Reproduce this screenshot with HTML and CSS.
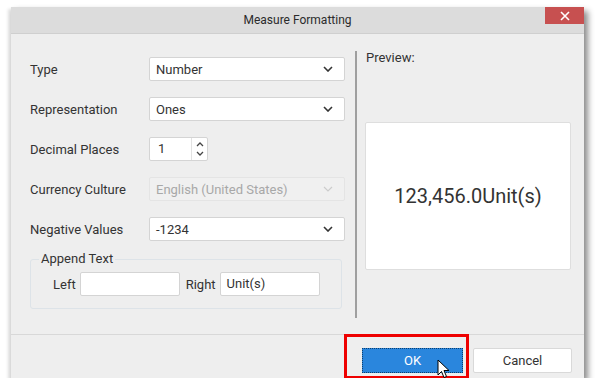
FILE: index.html
```html
<!DOCTYPE html>
<html>

<head>
    <meta charset="utf-8" />
    <title>Measure Formatting</title>
    <link rel="stylesheet" href="styles.css">
</head>

<body>
    <div class="dialog">
        <div class="titlebar">
            <span class="title">Measure Formatting</span>
            <button class="closeButton">
                <svg width="10" height="10" viewBox="0 0 10 10"><path d="M1 1L9 9M9 1L1 9" stroke="#fff" stroke-width="1.6"/></svg>
            </button>
        </div>

        <div class="content">
            <div class="leftPanel">
                <div class="row">
                    <label class="label">Type</label>
                    <div class="dropdown"><span>Number</span>
                        <svg class="chevron" width="10" height="6" viewBox="0 0 10 6"><path d="M1 1L5 5L9 1" fill="none" stroke="#333" stroke-width="1.6"/></svg>
                    </div>
                </div>
                <div class="row">
                    <label class="label">Representation</label>
                    <div class="dropdown"><span>Ones</span>
                        <svg class="chevron" width="10" height="6" viewBox="0 0 10 6"><path d="M1 1L5 5L9 1" fill="none" stroke="#333" stroke-width="1.6"/></svg>
                    </div>
                </div>
                <div class="row">
                    <label class="label">Decimal Places</label>
                    <div class="numeric">
                        <span class="numericValue">1</span>
                        <span class="spinner">
                            <svg width="8" height="5" viewBox="0 0 8 5"><path d="M1 4L4 1L7 4" fill="none" stroke="#444" stroke-width="1.3"/></svg>
                            <svg width="8" height="5" viewBox="0 0 8 5"><path d="M1 1L4 4L7 1" fill="none" stroke="#444" stroke-width="1.3"/></svg>
                        </span>
                    </div>
                </div>
                <div class="row">
                    <label class="label">Currency Culture</label>
                    <div class="dropdown disabled"><span>English (United States)</span>
                        <svg class="chevron" width="10" height="6" viewBox="0 0 10 6"><path d="M1 1L5 5L9 1" fill="none" stroke="#ccc" stroke-width="1.2"/></svg>
                    </div>
                </div>
                <div class="row">
                    <label class="label">Negative Values</label>
                    <div class="dropdown"><span>-1234</span>
                        <svg class="chevron" width="10" height="6" viewBox="0 0 10 6"><path d="M1 1L5 5L9 1" fill="none" stroke="#333" stroke-width="1.6"/></svg>
                    </div>
                </div>
                <fieldset class="appendBox">
                    <legend>Append Text</legend>
                    <div class="appendRow">
                        <label>Left</label>
                        <div class="textbox"></div>
                        <label>Right</label>
                        <div class="textbox">Unit(s)</div>
                    </div>
                </fieldset>
            </div>
            <div class="separator"></div>
            <div class="rightPanel">
                <div class="previewLabel">Preview:</div>
                <div class="previewBox">123,456.0Unit(s)</div>
            </div>
        </div>

        <div class="footer">
            <button class="okButton">OK</button>
            <button class="cancelButton">Cancel</button>
        </div>

        <div class="highlight"></div>
        <svg class="cursor" width="13" height="20" viewBox="0 0 13 20">
            <path d="M1 1L1 16L4.5 12.5L7 18.5L9.5 17.5L7 11.5L12 11.5Z" fill="#fff" stroke="#000" stroke-width="1"/>
        </svg>
    </div>
</body>

</html>
```

FILE: styles.css
```css
body {
    margin: 0;
    background-color: #ffffff;
    font-family: Roboto, "Liberation Sans", sans-serif;
    font-size: 13px;
    color: #333;
}

.dialog {
    position: relative;
    margin-left: 11px;
    margin-top: 7px;
    width: 573px;
    height: 371px;
    background-color: #eeeeee;
    display: flex;
    flex-direction: column;
    box-shadow: 4px 4px 6px rgba(0, 0, 0, 0.45), -3px 2px 3px rgba(0, 0, 0, 0.12);
}

.titlebar {
    position: relative;
    height: 26px;
    background-color: #dcdcdc;
    border-bottom: 1px solid #cfcfcf;
    display: flex;
    align-items: center;
    justify-content: center;
}

.title {
    font-size: 12px;
    color: #2b2b2b;
}

.closeButton {
    position: absolute;
    top: 0;
    right: 0;
    width: 39px;
    height: 17px;
    border: none;
    padding: 0;
    background-color: #c75050;
    display: flex;
    align-items: center;
    justify-content: center;
}

.content {
    display: flex;
    height: 300px;
    border-bottom: 1px solid #d8d8d8;
}

.leftPanel {
    width: 325px;
    padding: 23px 0 0 19px;
}

.row {
    display: flex;
    align-items: center;
    height: 24px;
    margin-bottom: 16px;
}

.label {
    width: 119px;
}

.dropdown {
    height: 22px;
    background-color: #fff;
    border: 1px solid #d4d4d4;
    border-radius: 2px;
    display: flex;
    align-items: center;
    justify-content: space-between;
    padding: 0 11px 0 6px;
    width: 177px;
}

.dropdown.disabled {
    background-color: #f0f0f0;
    border-color: #e4e4e4;
    color: #a8a8a8;
}

.chevron {
    display: block;
}

.numeric {
    width: 57px;
    height: 22px;
    background-color: #fff;
    border: 1px solid #d4d4d4;
    border-radius: 2px;
    display: flex;
}

.numericValue {
    width: 33px;
    padding-left: 8px;
    line-height: 22px;
    border-right: 1px solid #e2e2e2;
}

.spinner {
    flex: 1;
    display: flex;
    flex-direction: column;
    align-items: center;
    justify-content: center;
    gap: 4px;
}

.spinner svg {
    display: block;
}

.appendBox {
    margin: -6px 0 0 0;
    width: 294px;
    padding: 5px 8px 12px 8px;
    border: 1px solid #dde3e8;
    border-radius: 3px;
}

.appendBox legend {
    padding: 0 2px;
    line-height: 16px;
}

.appendRow {
    display: flex;
    align-items: center;
    padding-left: 14px;
}

.appendRow label {
    margin-right: 4px;
}

.textbox {
    width: 92px;
    height: 22px;
    line-height: 22px;
    padding-left: 6px;
    background-color: #fff;
    border: 1px solid #d4d4d4;
    border-radius: 2px;
    margin-right: 6px;
}

.separator {
    width: 2px;
    margin-top: 17px;
    height: 267px;
    background-color: #9f9f9f;
}

.rightPanel {
    flex: 1;
    padding: 16px 13px 0 8px;
}

.previewLabel {
    padding-left: 1px;
    line-height: 16px;
}

.previewBox {
    margin-top: 56px;
    height: 146px;
    background-color: #fff;
    border: 1px solid #dedede;
    border-radius: 2px;
    display: flex;
    align-items: center;
    justify-content: center;
    font-size: 20px;
    color: #333;
}

.footer {
    flex: 1;
    display: flex;
    justify-content: flex-end;
    align-items: flex-start;
    gap: 10px;
    padding-right: 12px;
    padding-top: 13px;
}

.okButton {
    width: 101px;
    height: 25px;
    background-color: #2a86dd;
    color: #fff;
    border: 1px dotted #0d3f6e;
    font-family: Roboto, "Liberation Sans", sans-serif;
    font-size: 13px;
}

.cancelButton {
    width: 99px;
    height: 25px;
    background-color: #fff;
    color: #333;
    border: 1px solid #d9d9d9;
    border-radius: 2px;
    font-family: Roboto, "Liberation Sans", sans-serif;
    font-size: 13px;
}

.highlight {
    position: absolute;
    left: 333px;
    top: 327px;
    width: 119px;
    height: 39px;
    border: 3px solid #ee0000;
}

.cursor {
    position: absolute;
    left: 426px;
    top: 352px;
}
```
